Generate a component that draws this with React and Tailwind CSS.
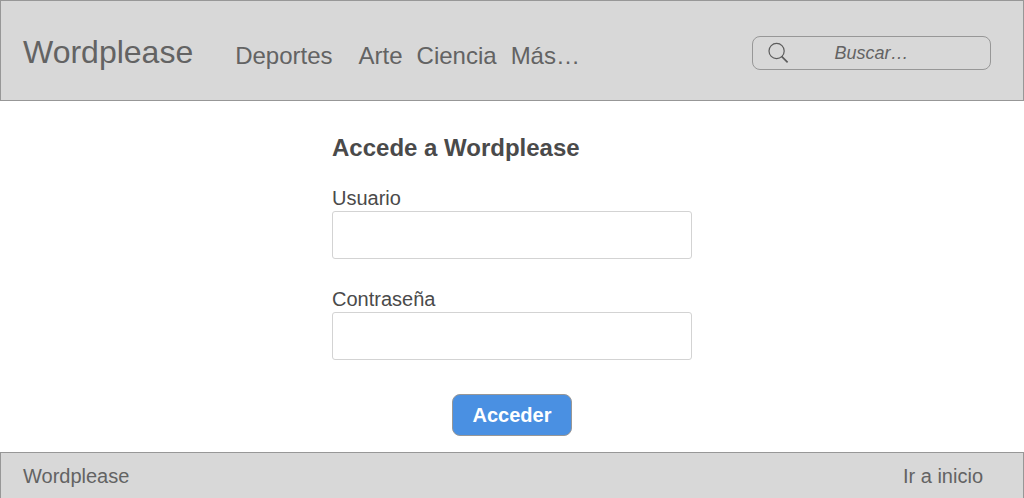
const categories = [
  { label: 'Deportes', className: 'mr-3' },
  { label: 'Arte', className: '' },
  { label: 'Ciencia', className: '' },
  { label: 'Más…', className: '' },
];

function Header() {
  return (
    <header className="flex items-center justify-between border border-[#979797] bg-[#d8d8d8] pt-[31px] pr-8 pb-[26px] pl-[22px] text-[#636363]">
      <div className="flex items-end gap-[42px] pb-0.5">
        <a href="#" className="text-[32px] leading-10">
          Wordplease
        </a>
        <nav className="flex gap-3.5 text-2xl leading-8">
          {categories.map(({ label, className }) => (
            <a key={label} href="#" className={className}>
              {label}
            </a>
          ))}
        </nav>
      </div>
      <form role="search" className="relative w-[239px]">
        <svg
          className="pointer-events-none absolute top-1.5 left-4 size-[21px]"
          viewBox="0 0 21 21"
          fill="none"
          stroke="#5c5c5c"
          aria-hidden="true"
        >
          <circle cx="8.6" cy="9" r="7.6" strokeWidth="1.2" />
          <path d="M13.6 14.4 L19.6 20.4" strokeWidth="1.6" />
        </svg>
        <input
          type="text"
          aria-label="Buscar"
          placeholder="Buscar…"
          className="block h-[34px] w-full rounded-lg border border-[#979797] bg-transparent px-10 text-center text-lg italic placeholder:text-[#636363] placeholder:opacity-100"
        />
      </form>
    </header>
  );
}

function Field({ id, label, type }) {
  return (
    <div>
      <label htmlFor={id} className="block text-xl leading-[26px]">
        {label}
      </label>
      <input
        id={id}
        type={type}
        className="block h-12 w-full rounded-[3px] border border-[#d3d3d3] bg-white px-3 text-xl"
      />
    </div>
  );
}

export default function App() {
  return (
    <div className="flex min-h-screen flex-col bg-white font-['Liberation_Sans',Arial,sans-serif]">
      <Header />
      <main className="flex grow justify-center px-4 pt-[31px] pb-4 text-[#4a4a4a]">
        <form className="flex w-full max-w-[360px] flex-col">
          <h1 className="mb-[21px] text-2xl leading-8 font-bold">Accede a Wordplease</h1>
          <div className="flex flex-col gap-[27px]">
            <Field id="usuario" label="Usuario" type="text" />
            <Field id="contrasena" label="Contraseña" type="password" />
          </div>
          <button
            type="button"
            className="mt-[34px] h-[42px] self-center rounded-lg border border-[#979797] bg-[#4a90e2] px-5 text-xl font-bold text-white"
          >
            Acceder
          </button>
        </form>
      </main>
      <footer className="flex justify-between border-x border-t border-[#979797] bg-[#d8d8d8] pt-2 pr-10 pb-[7px] pl-[22px] text-xl leading-[30px] text-[#636363]">
        <span>Wordplease</span>
        <a href="#">Ir a inicio</a>
      </footer>
    </div>
  );
}
